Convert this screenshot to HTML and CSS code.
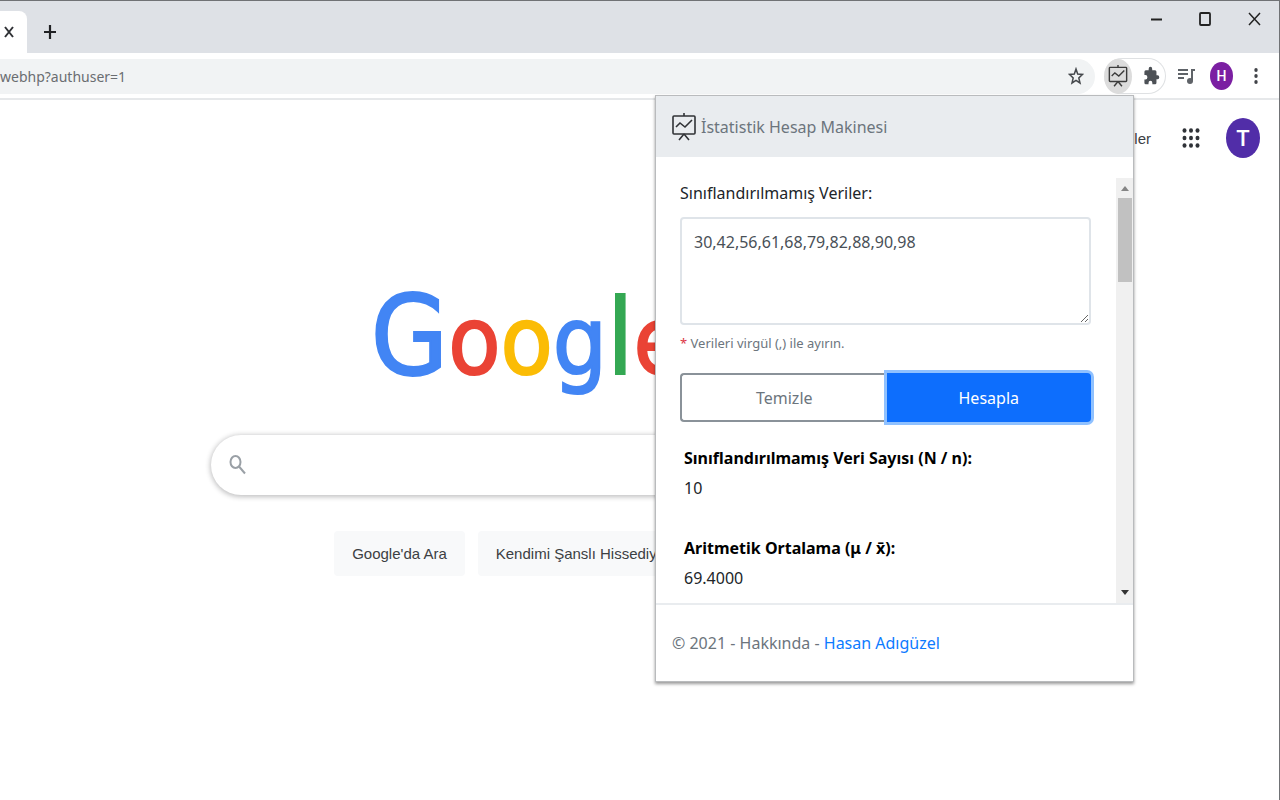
FILE: index.html
```html
<!DOCTYPE html>
<html lang="tr">
<head>
<meta charset="utf-8">
<title>Google</title>
<link rel="stylesheet" href="styles.css">
</head>
<body>
<div class="window">
  <header class="tabstrip">
    <div class="tab"><button class="icon-btn" aria-label="Sekmeyi kapat"><svg width="12" height="14" viewBox="0 0 12 14"><path d="M2 2l8 10M10 2L2 12" stroke="#303236" stroke-width="2" fill="none"/></svg></button></div>
    <button class="icon-btn new-tab" aria-label="Yeni sekme"><svg width="14" height="16" viewBox="0 0 14 16"><path d="M7 1v14M1 8h12" stroke="#202124" stroke-width="2.2" fill="none"/></svg></button>
    <div class="controls">
      <button class="icon-btn" aria-label="Simge durumuna küçült"><svg width="14" height="16" viewBox="0 0 14 16"><path d="M2 8.500h11" stroke="#222" stroke-width="2"/></svg></button>
      <button class="icon-btn" aria-label="Ekranı kapla"><svg width="14" height="16" viewBox="0 0 14 16"><rect x="2" y="2" width="10" height="12" rx="1" fill="none" stroke="#222" stroke-width="1.800"/></svg></button>
      <button class="icon-btn" aria-label="Kapat"><svg width="14" height="16" viewBox="0 0 14 16"><path d="M2 2l11 12M13 2L2 14" stroke="#222" stroke-width="1.500"/></svg></button>
    </div>
  </header>
  <div class="toolbar">
    <div class="address">
      <input class="url" type="text" aria-label="Adres" value="webhp?authuser=1">
      <button class="icon-btn" aria-label="Yer işareti"><svg width="16" height="18" viewBox="0 0 16 18"><path d="M8 2l1.700 5 4.800.4-3.700 3.600 1.200 5L8 13.400 4 16l1.200-5-3.700-3.600 4.800-.4z" fill="none" stroke="#45484c" stroke-width="1.500"/></svg></button>
    </div>
    <div class="extensions">
      <button class="icon-btn active-ext" aria-label="İstatistik Hesap Makinesi"><svg width="20" height="22" viewBox="0 0 24 28"><g fill="none" stroke="#3c3c3c" stroke-width="1.800"><rect x="1" y="3" width="22" height="18" rx="1"/><path d="M12 0v3M4 14l4-4 5 4 7-7M12 21l-5 6M12 21l5 6"/></g></svg></button>
      <button class="icon-btn puzzle" aria-label="Uzantılar"><svg width="17" height="20" viewBox="0 0 24 24" preserveAspectRatio="none"><path fill="#4d5156" d="M20.500 11H19V7a2 2 0 0 0-2-2h-4V3.500a2.500 2.500 0 0 0-5 0V5H4a2 2 0 0 0-2 2v3.800h1.500a2.700 2.700 0 0 1 0 5.400H2V20a2 2 0 0 0 2 2h3.800v-1.500a2.700 2.700 0 0 1 5.400 0V22H17a2 2 0 0 0 2-2v-4h1.500a2.500 2.500 0 0 0 0-5z"/></svg></button>
    </div>
    <button class="icon-btn media" aria-label="Medya"><svg width="18" height="18" viewBox="0 0 18 18"><g stroke="#5f6368" stroke-width="2" fill="none"><path d="M0 3h10M0 7h10M0 11h6M14 14V3h3"/></g><ellipse cx="12" cy="14" rx="3" ry="3" fill="#5f6368"/></svg></button>
    <button class="avatar avatar-small">H</button>
    <button class="icon-btn menu" aria-label="Menü"><svg width="6" height="18" viewBox="0 0 6 18" fill="#404348"><ellipse cx="3" cy="3" rx="1.700" ry="2"/><ellipse cx="3" cy="9" rx="1.700" ry="2"/><ellipse cx="3" cy="15" rx="1.700" ry="2"/></svg></button>
  </div>
  <div class="page">
    <nav class="page-nav">
      <a href="#">Görseller</a>
      <button class="icon-btn" aria-label="Google uygulamaları"><svg width="18" height="20" viewBox="0 0 18 20" fill="#303338"><g id="row"><ellipse cx="2.500" cy="2.500" rx="2" ry="2.300"/><ellipse cx="9" cy="2.500" rx="2" ry="2.300"/><ellipse cx="15.500" cy="2.500" rx="2" ry="2.300"/></g><use href="#row" y="7.500"/><use href="#row" y="15"/></svg></button>
      <button class="avatar avatar-large">T</button>
    </nav>
    <main class="search">
      <div class="logo"><span class="blue capital">G</span><span class="red">o</span><span class="yellow">o</span><span class="blue">g</span><span class="green tall">l</span><span class="red">e</span></div>
      <div class="search-box">
        <svg width="17" height="20" viewBox="0 0 17 20"><g fill="none" stroke="#9aa0a6" stroke-width="2"><ellipse cx="6.500" cy="7" rx="5" ry="6"/><path d="M10 11.500l6 7"/></g></svg>
        <input type="text" aria-label="Ara">
      </div>
      <div class="search-buttons">
        <button>Google'da Ara</button>
        <button>Kendimi Şanslı Hissediyorum</button>
      </div>
    </main>
  </div>
  <section class="popup">
    <header class="popup-header">
      <svg width="24" height="28" viewBox="0 0 24 28"><g fill="none" stroke="#303236" stroke-width="1.600"><rect x="1" y="3" width="22" height="18" rx="1"/><path d="M12 0v3M4 14l4-4 5 4 7-7M12 21l-5 6M12 21l5 6"/></g></svg>
      <span>İstatistik Hesap Makinesi</span>
    </header>
    <div class="popup-body">
      <div class="content">
        <label for="data">Sınıflandırılmamış Veriler:</label>
        <textarea id="data">30,42,56,61,68,79,82,88,90,98</textarea>
        <p class="hint"><span>*</span> Verileri virgül (,) ile ayırın.</p>
        <div class="actions">
          <button class="clear">Temizle</button>
          <button class="calc">Hesapla</button>
        </div>
        <dl class="results">
          <dt>Sınıflandırılmamış Veri Sayısı (N / n):</dt>
          <dd>10</dd>
          <dt>Aritmetik Ortalama (μ / x̄):</dt>
          <dd>69.4000</dd>
        </dl>
      </div>
      <div class="scrollbar">
        <svg width="17" height="20" viewBox="0 0 17 20"><path d="M5 13l4-5 4 5z" fill="#858585"/></svg>
        <div class="thumb"></div>
        <svg width="17" height="20" viewBox="0 0 17 20"><path d="M5 7l4 5 4-5z" fill="#333"/></svg>
      </div>
    </div>
    <footer class="popup-footer">© 2021 - Hakkında - <a href="#">Hasan Adıgüzel</a></footer>
  </section>
</div>
</body>
</html>
```
FILE: styles.css
```css
* { box-sizing: border-box; }
body { margin: 0; font-family: "Noto Sans", sans-serif; font-size: 16px; color: #212529; background: #fff; }
button { font: inherit; cursor: pointer; }
a { text-decoration: none; }
.window { position: relative; min-height: 100vh; overflow: hidden; display: flex; flex-direction: column; border-top: 1px solid #707275; border-right: 1px solid #707275; }
.icon-btn { display: flex; align-items: center; justify-content: center; padding: 0; border: 0; background: none; }
.tabstrip { display: flex; height: 52px; background: #dee1e6; }
.tab { width: 27px; margin-top: 10px; padding-left: 3px; display: flex; align-items: center; background: #fff; border-radius: 0 8px 0 0; }
.new-tab { margin: 10px 0 0 16px; }
.controls { display: flex; align-items: flex-start; gap: 35px; margin-left: auto; padding: 10px 18px 0 0; }
.toolbar { display: flex; align-items: center; height: 47px; padding: 1px 20px 0 0; border-bottom: 2px solid #e6e8ea; }
.address { flex: 1; display: flex; align-items: center; height: 35px; padding-right: 11px; background: #f1f3f4; border-radius: 0 18px 18px 0; }
.url { flex: 1; border: 0; padding: 0; background: none; font: 14px "Noto Sans", sans-serif; color: #6a6d71; outline: 0; }
.extensions { display: flex; align-items: center; width: 62px; height: 36px; margin-left: 9px; border: 1px solid #dfe1e3; border-left: 0; border-radius: 18px; }
.active-ext { width: 28px; height: 35px; border-radius: 50%; background: #dcdcdc; }
.puzzle { margin-left: 11px; }
.media { margin: 0 14px 0 12px; }
.avatar { display: flex; align-items: center; justify-content: center; padding: 0; border: 0; border-radius: 50%; color: #fff; font-family: Roboto, sans-serif; }
.avatar-small { width: 23px; height: 28px; background: #7b1fa2; font-size: 14px; font-weight: 500; }
.avatar-large { width: 34px; height: 40px; background: #512da8; font-size: 22px; font-weight: 500; }
.menu { margin-left: 20px; }
.page { flex: 1; }
.page-nav { display: flex; align-items: center; justify-content: flex-end; padding: 18px 19px 0 0; }
.page-nav a { margin-right: 31px; color: #3c4043; font: 15px "Liberation Sans", sans-serif; }
.page-nav .avatar { margin-left: 26px; }
.search { display: flex; flex-direction: column; align-items: center; padding: 118px 222px 0 0; }
.logo { height: 159px; font: 95px/120px "DejaVu Sans Condensed", "DejaVu Sans", sans-serif; white-space: nowrap; -webkit-text-stroke: 2px currentColor; }
.logo span { -webkit-text-stroke-color: currentColor; }
.capital { font-size: 111px; }
.tall { font-size: 106px; }
.blue { color: #4285f4; }
.red { color: #ea4335; }
.yellow { color: #fbbc05; }
.green { color: #34a853; }
.search-box { display: flex; align-items: center; width: 60%; min-width: 320px; height: 60px; padding: 0 18px; border-radius: 30px; box-shadow: 0 1px 5px 1px rgba(32, 33, 36, .28); }
.search-box input { flex: 1; border: 0; outline: 0; background: none; }
.search-buttons { display: flex; gap: 13px; margin: 36px 14px 0 0; }
.search-buttons button { height: 45px; padding: 0 18px; border: 0; border-radius: 4px; background: #f8f9fa; color: #3c4043; font: 15px "Liberation Sans", sans-serif; white-space: nowrap; }
.popup { position: absolute; top: 94px; right: 145px; width: 479px; background: #fff; border: 1px solid #b9bbbd; box-shadow: 0 2px 3px rgba(0, 0, 0, .4); }
.popup-header { display: flex; align-items: center; gap: 5px; height: 61px; padding: 0 16px; background: #e9ecef; color: #6c757d; }
.popup-body { display: flex; padding-top: 21px; height: 448px; border-bottom: 2px solid #e9ecef; }
.content { flex: 1; padding: 0 25px 0 24px; }
.content label { display: block; line-height: 30px; }
.content textarea { display: block; width: 100%; height: 108px; margin-top: 9px; padding: 8px 12px; border: 2px solid #dfe4e9; border-radius: 4px; color: #495057; font: 16px/30px "Noto Sans", sans-serif; outline: 0; resize: vertical; }
.hint { margin: 6px 0 0; font-size: 13px; line-height: 24px; color: #6c757d; }
.hint span { color: #dc3545; }
.actions { display: flex; margin: 18px 0 21px; }
.actions button { flex: 1; height: 49px; }
.clear { border: 2px solid #8a9299; border-right: 0; border-radius: 4px 0 0 4px; background: #fff; color: #6c757d; }
.calc { border: 0; border-radius: 0 4px 4px 0; background: #0d6efd; color: #fff; box-shadow: 0 0 0 3px #8fc1ff; }
.results { margin: 0; padding-left: 4px; line-height: 30px; }
.results dt { font-weight: 700; color: #000; }
.results dd { margin: 0 0 30px; }
.results dd:last-child { margin-bottom: 0; }
.scrollbar { display: flex; flex-direction: column; width: 17px; background: #f0f0f0; }
.scrollbar svg:last-child { margin-top: auto; }
.thumb { width: 14px; height: 84px; margin-left: 2px; background: #c1c1c1; }
.popup-footer { padding: 23px 16px; line-height: 30px; color: #6c757d; }
.popup-footer a { color: #0d7bff; }
```
